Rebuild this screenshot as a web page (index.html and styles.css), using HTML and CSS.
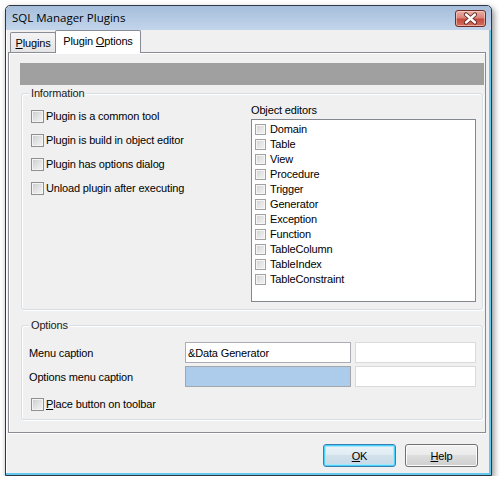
FILE: index.html
```html
<!DOCTYPE html>
<html>
<head>
<meta charset="utf-8">
<link rel="stylesheet" href="styles.css">
</head>
<body>
<div class="window">
  <div class="titlebar">
    <span class="title">SQL Manager Plugins</span>
    <div class="close">
      <svg width="29" height="15" viewBox="0 0 29 15">
        <path d="M10 3.5 L19 11.5 M19 3.5 L10 11.5" stroke="#5a2420" stroke-width="4.2" stroke-linecap="round" fill="none"/>
        <path d="M10 3.5 L19 11.5 M19 3.5 L10 11.5" stroke="#ffffff" stroke-width="2.4" stroke-linecap="round" fill="none"/>
      </svg>
    </div>
  </div>
  <div class="client">
    <div class="tabs">
      <div class="tab"><span><u>P</u>lugins</span></div>
      <div class="tab active"><span>Plugin <u>O</u>ptions</span></div>
    </div>
    <div class="sheet">
      <div class="graybar"></div>
      <div class="group info">
        <div class="legend">Information</div>
        <div class="info-grid">
          <div class="col-left">
            <div class="check-row"><span class="cb"></span><span>Plugin is a common tool</span></div>
            <div class="check-row"><span class="cb"></span><span>Plugin is build in object editor</span></div>
            <div class="check-row"><span class="cb"></span><span>Plugin has options dialog</span></div>
            <div class="check-row"><span class="cb"></span><span>Unload plugin after executing</span></div>
          </div>
          <div class="col-right">
            <div class="caption">Object editors</div>
            <div class="listbox">
              <div class="item"><span class="cb small"></span><span>Domain</span></div>
              <div class="item"><span class="cb small"></span><span>Table</span></div>
              <div class="item"><span class="cb small"></span><span>View</span></div>
              <div class="item"><span class="cb small"></span><span>Procedure</span></div>
              <div class="item"><span class="cb small"></span><span>Trigger</span></div>
              <div class="item"><span class="cb small"></span><span>Generator</span></div>
              <div class="item"><span class="cb small"></span><span>Exception</span></div>
              <div class="item"><span class="cb small"></span><span>Function</span></div>
              <div class="item"><span class="cb small"></span><span>TableColumn</span></div>
              <div class="item"><span class="cb small"></span><span>TableIndex</span></div>
              <div class="item"><span class="cb small"></span><span>TableConstraint</span></div>
            </div>
          </div>
        </div>
      </div>
      <div class="group options">
        <div class="legend">Options</div>
        <div class="opt-grid">
          <div class="lbl">Menu caption</div>
          <div class="edit">&amp;Data Generator</div>
          <div class="edit light"></div>
          <div class="lbl">Options menu caption</div>
          <div class="edit blue"></div>
          <div class="edit light"></div>
        </div>
        <div class="check-row place"><span class="cb"></span><span><u>P</u>lace button on toolbar</span></div>
      </div>
    </div>
    <div class="buttons">
      <div class="btn default"><span><u>O</u>K</span></div>
      <div class="btn"><span><u>H</u>elp</span></div>
    </div>
  </div>
</div>
</body>
</html>
```
FILE: styles.css
```css
* { box-sizing: border-box; }

body {
  margin: 0;
  background: #ffffff;
  font-family: "Liberation Sans", Arial, sans-serif;
  font-size: 11px;
  letter-spacing: -0.15px;
  color: #000;
}

.window {
  margin: 5px 0 0 5px;
  width: 487px;
  height: 471px;
  border: 1px solid #2e3843;
  border-radius: 5px 5px 0 0;
  background: #f0f0f0;
  box-shadow: 2px 3px 6px rgba(0, 0, 0, 0.45), inset -2px -2px 0 #62c6ee, inset 1px 0 0 #ffffff;
  display: flex;
  flex-direction: column;
  overflow: hidden;
}

.titlebar {
  height: 24px;
  flex: none;
  display: flex;
  align-items: flex-start;
  padding-left: 6px;
  background: linear-gradient(#a6bedb, #c2d5eb);
  border-radius: 4px 4px 0 0;
}

.title {
  font-family: "Open Sans", "Noto Sans", sans-serif;
  font-size: 11.5px;
  letter-spacing: 0;
  line-height: 24px;
  color: #000;
}

.close {
  margin-left: auto;
  margin-right: 5px;
  margin-top: 4px;
  width: 31px;
  height: 17px;
  border: 1px solid #6e2c28;
  border-radius: 3px;
  background: linear-gradient(#eab0a6 0%, #d98579 45%, #c44a3e 55%, #d3705f 100%);
  box-shadow: inset 0 0 0 1px rgba(255, 220, 210, 0.55);
  display: flex;
  align-items: center;
  justify-content: center;
}

.close svg { display: block; }

.client {
  flex: 1;
  display: flex;
  flex-direction: column;
  padding: 0 5px 0 2px;
}

.tabs {
  display: flex;
  align-items: flex-end;
  height: 23px;
  margin-bottom: -1px;
  padding-left: 2px;
}

.tab {
  height: 20px;
  margin-bottom: 1px;
  width: 46px;
  border: 1px solid #898c95;
  border-bottom: none;
  border-radius: 2px 2px 0 0;
  background: linear-gradient(#f4f4f4, #e4e4e4);
  display: flex;
  align-items: center;
  justify-content: center;
  padding-top: 1px;
}

.tab.active {
  width: 86px;
  height: 23px;
  margin-bottom: 0;
  margin-left: -1px;
  background: #ffffff;
  position: relative;
  z-index: 1;
  padding-top: 0;
  padding-bottom: 2px;
}

.sheet {
  flex: none;
  height: 381px;
  border: 1px solid #898c95;
  background: #f0f0f0;
  box-shadow: inset 1px 1px 0 #ffffff, 0 1px 0 #ffffff;
  padding: 10px 1px 0 11px;
}

.graybar {
  height: 22px;
  background: #a0a0a0;
}

.group {
  margin: 8px 1px 0 1px;
  border: 1px solid #d5dfe5;
  border-radius: 3px;
  box-shadow: inset 1px 1px 0 #ffffff, 1px 1px 0 #ffffff;
}

.group.info { height: 217px; }

.group.options {
  margin-top: 15px;
  height: 95px;
}

.legend {
  margin: -7px 0 0 7px;
  width: fit-content;
  padding: 0 2px;
  line-height: 13px;
  background: #f0f0f0;
  color: #1b1b1b;
}

.info-grid {
  display: grid;
  grid-template-columns: 220px 225px;
  margin-top: 4px;
  padding-left: 9px;
}

.check-row {
  display: flex;
  align-items: center;
  gap: 2px;
  height: 24px;
  line-height: 13px;
}

.cb {
  flex: none;
  width: 13px;
  height: 13px;
  border: 1px solid #8e8f8f;
  background: linear-gradient(135deg, #c9ccd1 0%, #e4e4e4 55%, #f6f6f6 100%);
  box-shadow: inset 0 0 0 1px #f4f4f4;
}

.cb.small {
  width: 11px;
  height: 11px;
  border-color: #a2a2a2;
  background: linear-gradient(135deg, #d2d2d2 0%, #e8e8e8 60%, #f4f4f4 100%);
  box-shadow: inset 0 0 0 1px #f6f6f6;
}

.caption {
  line-height: 13px;
}

.listbox {
  margin-top: 2px;
  width: 225px;
  height: 183px;
  border: 1px solid #828790;
  background: #ffffff;
  padding: 2px 0 0 3px;
}

.item {
  display: flex;
  align-items: center;
  gap: 4px;
  height: 15px;
  line-height: 13px;
}

.opt-grid {
  display: grid;
  grid-template-columns: 152px 166px 121px;
  grid-auto-rows: 21px;
  column-gap: 4px;
  row-gap: 3px;
  margin-top: 10px;
  padding-left: 7px;
}

.lbl {
  display: flex;
  align-items: center;
}

.edit {
  border: 1px solid #abadb3;
  background: #ffffff;
  padding-left: 2px;
  display: flex;
  align-items: center;
}

.edit.light {
  border-color: #dadada;
}

.edit.blue {
  background: #adcbeb;
  border-color: #a3a6ab;
}

.check-row.place {
  margin: 5px 0 0 9px;
}

.buttons {
  display: flex;
  justify-content: flex-end;
  gap: 9px;
  margin-top: 11px;
  padding-right: 8px;
}

.btn {
  width: 73px;
  height: 23px;
  border: 1px solid #707070;
  border-radius: 3px;
  background: linear-gradient(#f2f2f2 0%, #ebebeb 45%, #dddddd 50%, #cfcfcf 100%);
  box-shadow: inset 0 0 0 1px #fcfcfc;
  display: flex;
  align-items: center;
  justify-content: center;
}

.btn.default {
  border-color: #3c7fb1;
  background: linear-gradient(#eaf3f8 0%, #e0ecf3 45%, #d2e2ec 50%, #c6d9e6 100%);
  box-shadow: inset 0 0 0 1px #48d2fb, inset 0 0 0 2px #a8e6fb;
}
```
